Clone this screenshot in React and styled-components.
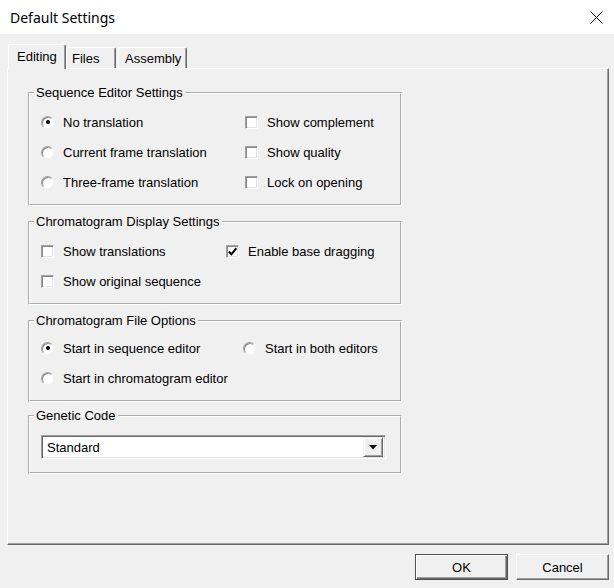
import React from "react"
import styled, { createGlobalStyle, css } from "styled-components"

const GlobalStyle = createGlobalStyle`
  html, body {
    margin: 0;
    padding: 0;
    background: #f0f0f0;
  }
  body {
    font-family: "Liberation Sans", Arial, sans-serif;
    font-size: 13px;
    color: #000;
  }
`

const Window = styled.div`
  width: 614px;
  height: 588px;
  display: flex;
  flex-direction: column;
  background: #f0f0f0;
  overflow: hidden;
`

const TitleBar = styled.div`
  height: 34px;
  flex: none;
  background: #fff;
  display: flex;
  align-items: center;
  justify-content: space-between;
  padding-left: 10px;
`

const Title = styled.div`
  font-family: "Noto Sans", "Open Sans", sans-serif;
  font-size: 14px;
  color: #000;
`

const CloseButton = styled.div`
  width: 24px;
  height: 34px;
  display: flex;
  align-items: center;
  justify-content: flex-start;
`

const Body = styled.div`
  flex: 1;
  display: flex;
  flex-direction: column;
  padding: 10px 5px 0 7px;
  min-height: 0;
`

const TabStrip = styled.div`
  height: 24px;
  display: flex;
  align-items: flex-end;
  padding-left: 1px;
  position: relative;
  z-index: 1;
`

const Tab = styled.div`
  box-sizing: border-box;
  width: ${(p) => p.$w}px;
  margin-right: ${(p) => p.$gap || 0}px;
  padding-left: ${(p) => p.$pad}px;
  background: #f0f0f0;
  border-top: 1px solid #fff;
  border-left: 1px solid #fff;
  border-right: 1px solid #696969;
  box-shadow: inset -1px 0 0 #a0a0a0;
  border-radius: 2px 2px 0 0;
  display: flex;
  align-items: center;
  ${(p) =>
    p.$active
      ? css`
          height: 25px;
          margin-bottom: -1px;
          padding-bottom: 1px;
        `
      : css`
          height: 21px;
        `}
`

const Panel = styled.div`
  flex: 1;
  box-sizing: border-box;
  border-top: 1px solid #fff;
  border-left: 1px solid #fff;
  border-right: 1px solid #696969;
  border-bottom: 1px solid #696969;
  box-shadow: inset -1px -1px 0 #a0a0a0;
  padding: 16px 0 0 20px;
  display: flex;
  flex-direction: column;
  align-items: flex-start;
`

const Group = styled.fieldset`
  width: 374px;
  box-sizing: border-box;
  margin: 0 0 ${(p) => p.$gap}px 0;
  padding: ${(p) => p.$pt}px 0 ${(p) => p.$pb}px 0;
  border: 2px groove #fff;
  min-width: 0;
`

const Legend = styled.legend`
  margin-left: 4px;
  padding: 0 2px;
  line-height: 15px;
  font-size: 13px;
`

const Options = styled.div`
  display: grid;
  grid-template-columns: ${(p) => p.$col}px auto;
  grid-auto-rows: 30px;
  padding-left: 11px;
`

const Option = styled.div`
  display: flex;
  align-items: center;
  gap: 9px;
  white-space: nowrap;
  grid-column: ${(p) => p.$column};
`

const RadioMark = styled.span`
  width: 13px;
  height: 13px;
  box-sizing: border-box;
  border-radius: 50%;
  background: #fff;
  border: 1px solid;
  border-color: #a0a0a0 #f4f4f4 #f4f4f4 #a0a0a0;
  box-shadow: inset 1px 1px 0 #8a8a8a;
  display: flex;
  align-items: center;
  justify-content: center;
  flex: none;

  &::after {
    content: "";
    width: 4px;
    height: 4px;
    border-radius: 50%;
    background: ${(p) => (p.$on ? "#000" : "transparent")};
  }
`

const CheckMark = styled.span`
  width: 13px;
  height: 13px;
  box-sizing: border-box;
  background: #fff;
  border: 1px solid;
  border-color: #a0a0a0 #fff #fff #a0a0a0;
  box-shadow: inset 1px 1px 0 #8a8a8a, inset -1px -1px 0 #e3e3e3;
  display: flex;
  align-items: center;
  justify-content: center;
  flex: none;
`

const Select = styled.div`
  width: 345px;
  height: 24px;
  margin-left: 11px;
  box-sizing: border-box;
  background: #fff;
  border: 1px solid;
  border-color: #a0a0a0 #fff #fff #a0a0a0;
  box-shadow: inset 1px 1px 0 #696969, inset -1px -1px 0 #e3e3e3;
  display: flex;
  align-items: center;
  padding: 2px 2px 2px 5px;
`

const SelectValue = styled.div`
  flex: 1;
`

const DropButton = styled.div`
  width: 20px;
  height: 20px;
  box-sizing: border-box;
  background: #f0f0f0;
  border: 1px solid;
  border-color: #f0f0f0 #696969 #696969 #f0f0f0;
  box-shadow: inset 1px 1px 0 #fff, inset -1px -1px 0 #a0a0a0;
  display: flex;
  align-items: center;
  justify-content: center;
`

const ButtonRow = styled.div`
  height: 43px;
  flex: none;
  display: flex;
  justify-content: flex-end;
  align-items: flex-start;
  gap: 8px;
  padding-top: 9px;
  box-sizing: border-box;
`

const Button = styled.div`
  width: 93px;
  height: 26px;
  box-sizing: border-box;
  background: #f0f0f0;
  display: flex;
  align-items: center;
  justify-content: center;
  border: 1px solid;
  ${(p) =>
    p.$default
      ? css`
          border-color: #505050;
          box-shadow: inset 1px 1px 0 #fff, inset -1px -1px 0 #696969, inset -2px -2px 0 #a0a0a0;
        `
      : css`
          border-color: #fff #696969 #696969 #fff;
          box-shadow: inset -1px -1px 0 #a0a0a0;
        `}
`

const Radio = ({ on, column, children }) => (
  <Option $column={column}>
    <RadioMark $on={on} />
    {children}
  </Option>
)

const Check = ({ on, column, children }) => (
  <Option $column={column}>
    <CheckMark>
      {on && (
        <svg width="9" height="9" viewBox="0 0 9 9">
          <path d="M0.8 4.5 L3.4 7.3 L8.3 1.2" fill="none" stroke="#000" strokeWidth="2" />
        </svg>
      )}
    </CheckMark>
    {children}
  </Option>
)

export default function App() {
  return (
    <Window>
      <GlobalStyle />
      <TitleBar>
        <Title>Default Settings</Title>
        <CloseButton>
          <svg width="13" height="13" viewBox="0 0 13 13">
            <path d="M0.5 0.5 L12.5 12.5 M12.5 0.5 L0.5 12.5" stroke="#000" strokeWidth="1" />
          </svg>
        </CloseButton>
      </TitleBar>
      <Body>
        <TabStrip>
          <Tab $active $w={58} $pad={8}>Editing</Tab>
          <Tab $w={50} $pad={5} $gap={2}>Files</Tab>
          <Tab $w={69} $pad={6}>Assembly</Tab>
        </TabStrip>
        <Panel>
          <Group $gap={8} $pt={7} $pb={7}>
            <Legend>Sequence Editor Settings</Legend>
            <Options $col={204}>
              <Radio on column={1}>No translation</Radio>
              <Check column={2}>Show complement</Check>
              <Radio column={1}>Current frame translation</Radio>
              <Check column={2}>Show quality</Check>
              <Radio column={1}>Three-frame translation</Radio>
              <Check column={2}>Lock on opening</Check>
            </Options>
          </Group>
          <Group $gap={8} $pt={7} $pb={7}>
            <Legend>Chromatogram Display Settings</Legend>
            <Options $col={185}>
              <Check column={1}>Show translations</Check>
              <Check on column={2}>Enable base dragging</Check>
              <Check column={1}>Show original sequence</Check>
            </Options>
          </Group>
          <Group $gap={6} $pt={5} $pb={7}>
            <Legend>Chromatogram File Options</Legend>
            <Options $col={202}>
              <Radio on column={1}>Start in sequence editor</Radio>
              <Radio column={2}>Start in both editors</Radio>
              <Radio column={1}>Start in chromatogram editor</Radio>
            </Options>
          </Group>
          <Group $gap={0} $pt={12} $pb={13}>
            <Legend>Genetic Code</Legend>
            <Select>
              <SelectValue>Standard</SelectValue>
              <DropButton>
                <svg width="8" height="5" viewBox="0 0 8 5">
                  <path d="M0 0 H8 L4 4.5 Z" fill="#000" />
                </svg>
              </DropButton>
            </Select>
          </Group>
        </Panel>
        <ButtonRow>
          <Button $default>OK</Button>
          <Button>Cancel</Button>
        </ButtonRow>
      </Body>
    </Window>
  )
}
